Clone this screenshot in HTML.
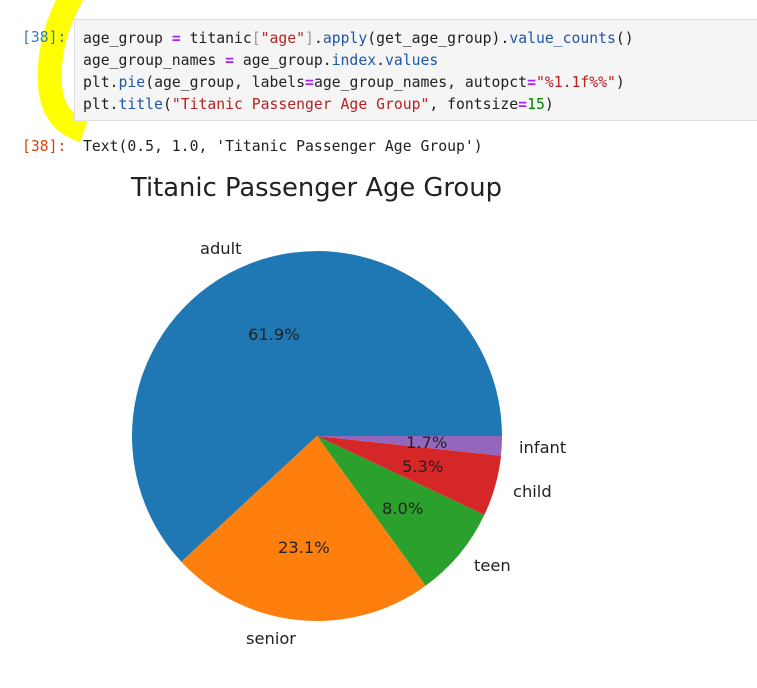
<!DOCTYPE html>
<html><head><meta charset="utf-8"><style>
html,body{margin:0;padding:0;background:#fff;width:757px;height:688px;overflow:hidden;position:relative}
.code{position:absolute;left:74px;top:19px;width:690px;height:102px;background:#f5f5f5;border:1px solid #e0e0e0;box-sizing:border-box}
pre{margin:0;position:absolute;left:83px;top:28px;font-family:"DejaVu Sans Mono","Liberation Mono",monospace;font-size:14.75px;line-height:22px;color:#212121}
.p{position:absolute;font-family:"DejaVu Sans Mono","Liberation Mono",monospace;font-size:14.75px}
.k{color:#aa22ff;font-weight:bold}.s{color:#ba2121}.f{color:#1e57a8}.b{color:#999}.n{color:#008000}
</style></head><body>
<svg width="120" height="160" style="position:absolute;left:0;top:0">
<path d="M74 -8 C56 22 48 55 50 85 C52 112 64 124 84 131" fill="none" stroke="#ffff00" stroke-width="24"/>
</svg>
<div class="code"></div>
<pre>age_group <span class="k">=</span> titanic<span class="b">[</span><span class="s">"age"</span><span class="b">]</span>.<span class="f">apply</span>(get_age_group).<span class="f">value_counts</span>()
age_group_names <span class="k">=</span> age_group.<span class="f">index</span>.<span class="f">values</span>
plt.<span class="f">pie</span>(age_group, labels<span class="k">=</span>age_group_names, autopct<span class="k">=</span><span class="s">"%1.1f%%"</span>)
plt.<span class="f">title</span>(<span class="s">"Titanic Passenger Age Group"</span>, fontsize<span class="k">=</span><span class="n">15</span>)</pre>
<div class="p" style="left:22px;top:29px;color:#307fc1">[38]:</div>
<div class="p" style="left:22px;top:138px;color:#d84315">[38]:</div>
<div class="p" style="left:83px;top:138px;color:#212121">Text(0.5, 1.0, 'Titanic Passenger Age Group')</div>
<svg width="757" height="688" style="position:absolute;left:0;top:0" font-family="DejaVu Sans, sans-serif">
<text x="131" y="196" font-size="25.8" fill="#222">Titanic Passenger Age Group</text>
<g>
<path d="M317 436 L502 436 A185 185 0 1 0 181.3 561.8 Z" fill="#1f77b4"/>
<path d="M317 436 L181.3 561.8 A185 185 0 0 0 425.7 585.7 Z" fill="#ff7f0e"/>
<path d="M317 436 L425.7 585.7 A185 185 0 0 0 484.4 514.8 Z" fill="#2ca02c"/>
<path d="M317 436 L484.4 514.8 A185 185 0 0 0 501 455.7 Z" fill="#d62728"/>
<path d="M317 436 L501 455.7 A185 185 0 0 0 502 436 Z" fill="#9467bd"/>
</g>
<g font-size="16.3" fill="#222">
<text x="200" y="254">adult</text>
<text x="248" y="340">61.9%</text>
<text x="246" y="644">senior</text>
<text x="278" y="553">23.1%</text>
<text x="474" y="571">teen</text>
<text x="382" y="514">8.0%</text>
<text x="513" y="497">child</text>
<text x="402" y="472">5.3%</text>
<text x="519" y="453">infant</text>
<text x="406" y="448">1.7%</text>
</g>
</svg>
</body></html>
